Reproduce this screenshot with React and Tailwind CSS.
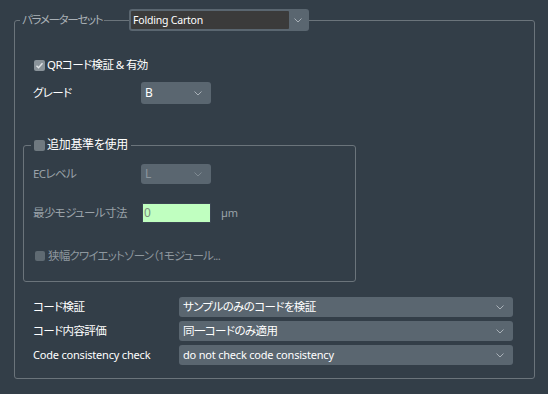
import React from "react";

const JP = "text-[11.5px] tracking-[-0.6px]";

function Chevron({ color = "#a9b1b8" }) {
  return (
    <svg width="8" height="5" viewBox="0 0 8 5" className="shrink-0">
      <polyline points="0.5,0.5 4,4 7.5,0.5" fill="none" stroke={color} strokeWidth="1" />
    </svg>
  );
}

function Select({ value, className = "", disabled = false, jp = false }) {
  return (
    <div
      className={`flex items-center justify-between rounded-[3px] bg-[#5a6670] pl-[4px] pr-[9px] ${className}`}
    >
      <span className={`${disabled ? "text-[#8d979e]" : "text-white"} ${jp ? JP : ""}`}>{value}</span>
      <Chevron color={disabled ? "#7f8a92" : "#a9b1b8"} />
    </div>
  );
}

function CheckBox({ checked = false, size = "w-[11px] h-[11px]", color = "bg-[#6f7980]" }) {
  return (
    <span className={`flex items-center justify-center rounded-[2px] ${size} ${color}`}>
      {checked && (
        <svg width="9" height="9" viewBox="0 0 9 9">
          <polyline points="1.5,4.8 3.5,6.8 7.5,2.2" fill="none" stroke="#dfe3e6" strokeWidth="1.4" />
        </svg>
      )}
    </span>
  );
}

export default function App() {
  return (
    <div className="w-[548px] h-[394px] overflow-hidden bg-[#333e48] font-['Noto_Sans','Noto_Sans_CJK_JP',sans-serif] text-[11px] tracking-[-0.2px] leading-[16px] text-white [font-feature-settings:'palt']">
      <div className="relative pt-[12px]">
        <fieldset className="ml-[14px] w-[521px] h-[367px] min-w-0 rounded-[3px] border border-[#6b747b] pl-[5px]">
          <legend className="px-[2px] text-[#a9b0b6] leading-[16px] text-[11.5px] tracking-[-1.3px]">パラメーターセット</legend>

          <div className="mt-[29px] flex h-[16px] items-center pl-[13px]">
            <span className="ml-[1px]">
              <CheckBox checked color="bg-[#8a939a]" />
            </span>
            <span className={`ml-[2px] ${JP}`}>QRコード検証 &amp; 有効</span>
          </div>

          <div className="mt-[9px] flex h-[22px] items-center pl-[13px]">
            <span className={`w-[108px] ${JP}`}>グレード</span>
            <Select value="B" className="h-[22px] w-[70px] text-[12px]" />
          </div>

          <fieldset className="ml-[3px] mt-[33px] w-[333px] h-[145px] min-w-0 rounded-[3px] border border-[#6b747b] pl-[7px]">
            <legend className="px-[1px] leading-[16px]">
              <span className="flex items-center">
                <span className="ml-[2px]">
                  <CheckBox />
                </span>
                <span className="ml-[2px] pr-[2px] text-[12px] tracking-[-0.3px]">追加基準を使用</span>
              </span>
            </legend>

            <div className="mt-[11px] flex h-[20px] items-center pl-[2px]">
              <span className={`w-[108px] text-[#9aa2a9] ${JP}`}>ECレベル</span>
              <Select value="L" disabled className="h-[20px] w-[70px] text-[12px]" />
            </div>

            <div className="mt-[19px] flex h-[20px] items-center pl-[2px]">
              <span className={`w-[108px] text-[#9aa2a9] ${JP}`}>最少モジュール寸法</span>
              <div className="ml-[1px] flex h-[20px] w-[69px] items-center border border-[#3b4652] bg-[#c0ffc0] pl-[1px] text-[12px] text-[#7c8c7c]">
                0
              </div>
              <span className="ml-[10px] text-[#9aa2a9]">µm</span>
            </div>

            <div className="mt-[26px] flex h-[14px] items-center pl-[2px]">
              <span className="ml-[2px]">
                <CheckBox size="w-[10px] h-[10px]" color="bg-[#5f6a72]" />
              </span>
              <span className="ml-[3px] text-[#8e979e] text-[11.5px] tracking-[-0.8px]">
                狭幅クワイエットゾーン（1モジュール...
              </span>
            </div>
          </fieldset>

          <div className="mt-[15px] flex flex-col gap-[4px] pl-[13px]">
            <div className="flex h-[20px] items-center">
              <span className={`w-[146px] ${JP}`}>コード検証</span>
              <Select value="サンプルのみのコードを検証" jp className="h-[20px] w-[334px]" />
            </div>
            <div className="flex h-[20px] items-center">
              <span className={`w-[146px] ${JP}`}>コード内容評価</span>
              <Select value="同一コードのみ適用" jp className="h-[20px] w-[334px]" />
            </div>
            <div className="flex h-[20px] items-center">
              <span className="w-[146px]">Code consistency check</span>
              <Select value="do not check code consistency" className="h-[20px] w-[334px]" />
            </div>
          </div>
        </fieldset>

        <div className="absolute left-[129px] top-[9px] flex h-[22px] w-[180px] rounded-[3px] bg-[#5a6670] p-[2px]">
          <div className="flex flex-1 items-center rounded-[1px] bg-[#3b3b3b] pl-[2px] text-[10.5px] text-white">
            Folding Carton
          </div>
          <div className="flex w-[18px] items-center justify-center">
            <Chevron />
          </div>
        </div>
      </div>
    </div>
  );
}
